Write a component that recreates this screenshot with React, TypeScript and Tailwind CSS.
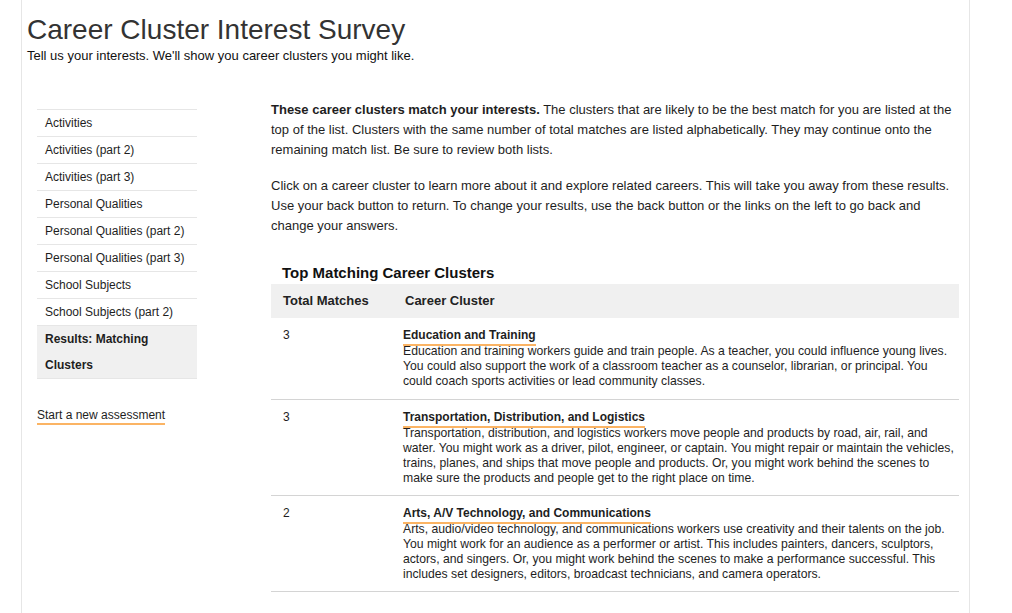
import React from "react";

const nav = [
  "Activities",
  "Activities (part 2)",
  "Activities (part 3)",
  "Personal Qualities",
  "Personal Qualities (part 2)",
  "Personal Qualities (part 3)",
  "School Subjects",
  "School Subjects (part 2)",
];

const rows = [
  {
    n: "3",
    title: "Education and Training",
    pad: "pb-[10px]",
    lines: [
      "Education and training workers guide and train people. As a teacher, you could influence young lives.",
      "You could also support the work of a classroom teacher as a counselor, librarian, or principal. You",
      "could coach sports activities or lead community classes.",
    ],
  },
  {
    n: "3",
    title: "Transportation, Distribution, and Logistics",
    pad: "pb-[9px]",
    lines: [
      "Transportation, distribution, and logistics workers move people and products by road, air, rail, and",
      "water. You might work as a driver, pilot, engineer, or captain. You might repair or maintain the vehicles,",
      "trains, planes, and ships that move people and products. Or, you might work behind the scenes to",
      "make sure the products and people get to the right place on time.",
    ],
  },
  {
    n: "2",
    title: "Arts, A/V Technology, and Communications",
    pad: "pb-[9px]",
    lines: [
      "Arts, audio/video technology, and communications workers use creativity and their talents on the job.",
      "You might work for an audience as a performer or artist. This includes painters, dancers, sculptors,",
      "actors, and singers. Or, you might work behind the scenes to make a performance successful. This",
      "includes set designers, editors, broadcast technicians, and camera operators.",
    ],
  },
];

export default function App() {
  return (
    <div className="min-h-[613px] bg-white text-[#1e1e1e]" style={{ fontFamily: '"Liberation Sans", Arial, sans-serif' }}>
      <div className="ml-[21px] w-[949px] min-h-[613px] border-x border-[#e6e6e6] pl-[5px] pt-[14px]">
        <h1 className="text-[28px] leading-[32px] text-[#333] font-normal">Career Cluster Interest Survey</h1>
        <p className="pt-[1px] text-[13px] leading-[18px] text-[#111]">Tell us your interests. We'll show you career clusters you might like.</p>

        <div className="mt-[35px] flex">
          <div className="ml-[10px] w-[160px] shrink-0 pt-[9px]">
            <ul className="text-[12px]">
              {nav.map((t) => (
                <li key={t} className="border-t border-[#e6e6e6] pl-[8px] leading-[26px]">
                  {t}
                </li>
              ))}
              <li className="border-y border-[#e6e6e6] bg-[#f0f0f0] pl-[8px] pr-[40px] font-bold leading-[26px]">
                Results: Matching Clusters
              </li>
            </ul>
            <div className="mt-[29px] text-[12px] leading-[14px]">
              <span className="border-b-2 border-[#fbb464] pb-[1px]">Start a new assessment</span>
            </div>
          </div>

          <div className="ml-[74px] w-[688px] shrink-0">
            <p className="text-[13px] leading-[20px]">
              <b>These career clusters match your interests.</b> The clusters that are likely to be the best match for you are listed at the top of the list. Clusters with the same number of total matches are listed alphabetically. They may continue onto the remaining match list. Be sure to review both lists.
            </p>
            <p className="mt-[16px] text-[13px] leading-[20px]">
              Click on a career cluster to learn more about it and explore related careers. This will take you away from these results. Use your back button to return. To change your results, use the back button or the links on the left to go back and change your answers.
            </p>

            <div className="mt-[28px] pl-[11px] text-[15px] font-bold leading-[18px] text-[#111]">Top Matching Career Clusters</div>
            <div className="mt-[2px] flex h-[34px] items-center bg-[#f0f0f0] text-[13px] font-bold text-[#222]">
              <div className="w-[120px] pl-[12px]">Total Matches</div>
              <div className="pl-[14px]">Career Cluster</div>
            </div>
            {rows.map((r) => (
              <div key={r.title} className={`flex border-b border-[#d4d4d4] pt-[9px] ${r.pad}`}>
                <div className="w-[120px] shrink-0 pl-[12px] text-[12px] leading-[17px]">{r.n}</div>
                <div className="pl-[12px] pr-[4px]">
                  <div className="text-[12px] leading-[17px]">
                    <span className="border-b-2 border-[#fbb464] pb-[2px] font-bold">{r.title}</span>
                  </div>
                  <div className="text-[12.2px] leading-[15px]">
                    {r.lines.map((l) => (
                      <div key={l} className="whitespace-nowrap">
                        {l}
                      </div>
                    ))}
                  </div>
                </div>
              </div>
            ))}
          </div>
        </div>
      </div>
    </div>
  );
}
